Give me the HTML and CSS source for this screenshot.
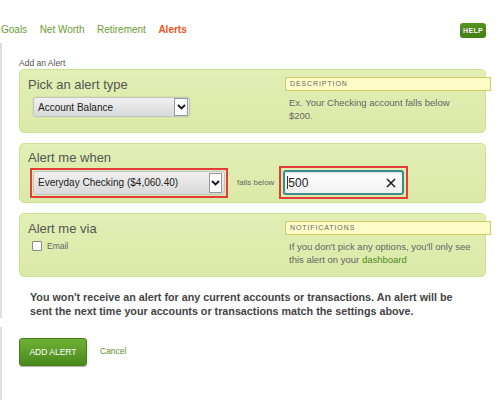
FILE: index.html
```html
<!DOCTYPE html>
<html lang="en">
<head>
<meta charset="utf-8">
<title>Add an Alert</title>
<link rel="stylesheet" href="styles.css">
</head>
<body>
<div class="page">
  <nav class="tabs">
    <a class="tab">Goals</a>
    <a class="tab">Net Worth</a>
    <a class="tab">Retirement</a>
    <a class="tab active">Alerts</a>
    <span class="help">HELP</span>
  </nav>

  <div class="content">
    <div class="title">Add an Alert</div>

    <section class="panel">
      <div class="main">
        <h2>Pick an alert type</h2>
        <div class="select sel-type">
          <span class="sel-text">Account Balance</span>
          <span class="arrow"><svg width="9" height="6" viewBox="0 0 9 6"><polyline points="1,1 4.5,4.5 8,1" fill="none" stroke="#14142a" stroke-width="1.8"/></svg></span>
        </div>
      </div>
      <aside class="note">
        <div class="note-label">DESCRIPTION</div>
        <p>Ex. Your Checking account falls below $200.</p>
      </aside>
    </section>

    <section class="panel panel-when">
      <div class="main">
        <h2>Alert me when</h2>
        <div class="row">
          <div class="hl hl-select">
            <div class="select sel-acct">
              <span class="sel-text">Everyday Checking ($4,060.40)</span>
              <span class="arrow"><svg width="9" height="6" viewBox="0 0 9 6"><polyline points="1,1 4.5,4.5 8,1" fill="none" stroke="#14142a" stroke-width="1.8"/></svg></span>
            </div>
          </div>
          <span class="falls">falls below</span>
          <div class="hl hl-input">
            <div class="input">
              <span class="caret"></span><span class="val">500</span>
              <svg class="clear" width="10" height="10" viewBox="0 0 10 10"><path d="M1 1L9 9M9 1L1 9" stroke="#222" stroke-width="1.6" fill="none"/></svg>
            </div>
          </div>
        </div>
      </div>
    </section>

    <section class="panel">
      <div class="main">
        <h2>Alert me via</h2>
        <label class="check-row"><span class="checkbox"></span><span class="check-text">Email</span></label>
      </div>
      <aside class="note">
        <div class="note-label">NOTIFICATIONS</div>
        <p>If you don't pick any options, you'll only see this alert on your <a class="link">dashboard</a></p>
      </aside>
    </section>

    <p class="warning">You won't receive an alert for any current accounts or transactions. An alert will be sent the next time your accounts or transactions match the settings above.</p>
  </div>

  <div class="actions">
    <button class="btn">ADD ALERT</button>
    <a class="cancel">Cancel</a>
  </div>
</div>
</body>
</html>
```

FILE: styles.css
```css
* { box-sizing: border-box; }
html, body { margin: 0; padding: 0; background: #fff; }
body { font-family: "Liberation Sans", Arial, sans-serif; color: #555; }
.page { width: 500px; height: 400px; overflow: hidden; }

.tabs {
  display: flex;
  align-items: center;
  gap: 12.5px;
  height: 43px;
  padding: 22px 14px 5px 1px;
}
.tab { font-size: 10px; line-height: 16px; color: #6e9b34; text-decoration: none; }
.tab.active { color: #f2541b; font-weight: bold; }
.help {
  margin-left: auto;
  margin-top: 1px;
  width: 26px;
  height: 15px;
  border-radius: 3px;
  background: linear-gradient(#55951f, #437f16);
  color: #fff;
  font-size: 7px;
  font-weight: bold;
  letter-spacing: 0.3px;
  line-height: 15px;
  text-align: center;
  text-shadow: 0 0 1px rgba(0,0,0,0.4);
}

.content {
  border-left: 2px solid #dedede;
  padding: 15px 14px 0 17px;
}
.title { font-size: 8.5px; line-height: 10px; margin-bottom: 1px; color: #555; }

.panel {
  display: flex;
  align-items: flex-start;
  background: linear-gradient(#e2efb5, #dbe9a8);
  border: 1px solid #cde393;
  border-radius: 5px;
  padding: 7px 0 10px 8px;
}
.panel + .panel { margin-top: 10px; }
.panel-when { padding: 6px 0 3px 8px; }
.main { flex: 1; }
h2 { margin: 0; font-size: 13px; font-weight: normal; line-height: 16px; color: #555; }

.note { flex: none; width: 206px; margin-right: -6px; }
.note-label {
  height: 14px;
  background: #fdfcc6;
  border: 1px solid #cdcc6a;
  padding-left: 4px;
  font-size: 7px;
  line-height: 12px;
  letter-spacing: 0.9px;
  color: #666;
}
.note p { margin: 5px 0 0; padding-left: 4px; width: 190px; font-size: 9.5px; line-height: 13px; color: #666; }
.link { color: #4f8a1f; text-decoration: none; }

.select {
  display: flex;
  align-items: center;
  border: 1px solid #c4c4c4;
  border-radius: 3px;
  background: linear-gradient(#f0f0f0, #d9d9d9);
  padding-left: 4px;
  font-size: 10px;
  color: #222;
}
.sel-text { flex: 1; }
.sel-type { margin: 4px 0 0 5px; width: 157px; height: 20px; box-shadow: 0 0 0 1px #d2e8a0; }
.arrow {
  display: flex;
  align-items: center;
  justify-content: center;
  width: 14px;
  height: 18px;
  background: #fbfbfb;
  border: 1px solid #9a9a9a;
}
.sel-type .arrow { margin-right: 1px; }

.row { display: flex; align-items: center; margin-left: 2px; }
.hl { border: 2px solid #e43b3b; }
.hl-select { padding: 1px; }
.sel-acct { width: 192px; height: 24px; }
.sel-acct .arrow { width: 13px; height: 20px; margin-right: 2px; }
.falls { margin: 0 5px 0 9px; font-size: 8px; color: #666; }
.hl-input { padding: 2px; }
.input {
  display: flex;
  align-items: center;
  width: 121px;
  height: 25px;
  border: 2px solid #3a8d8f;
  border-radius: 3px;
  background: linear-gradient(#ffffff, #f1f1f1);
  box-shadow: inset 0 1px 2px rgba(0,0,0,0.15);
  padding-left: 2px;
}
.caret { width: 1px; height: 13px; background: #333; }
.val { font-size: 12px; color: #222; }
.clear { margin-left: auto; margin-right: 6px; }

.check-row { display: flex; align-items: center; height: 12px; margin-top: 3px; }
.checkbox {
  width: 10px;
  height: 10px;
  margin-left: 4px;
  background: #fff;
  border: 1px solid #8a8a8a;
  border-radius: 1px;
}
.check-text { margin-left: 5px; font-size: 8.5px; color: #666; }

.warning {
  margin: 13px 0 0 11px;
  width: 432px;
  font-size: 10.75px;
  line-height: 14px;
  font-weight: bold;
  color: #444;
}

.actions {
  display: flex;
  align-items: flex-start;
  height: 73px;
  margin-top: 9px;
  padding: 11px 0 0 17px;
  border-left: 2px solid #dedede;
}
.btn {
  width: 68px;
  height: 28px;
  border: 1px solid #44801a;
  border-radius: 3px;
  background: linear-gradient(#6fb136, #4b891d);
  box-shadow: 0 1px 1px rgba(0,0,0,0.3);
  color: #fff;
  font-family: "Liberation Sans", Arial, sans-serif;
  font-size: 8.5px;
  padding: 0;
}
.cancel { margin: 8px 0 0 13px; font-size: 8.5px; line-height: 10px; color: #5e9228; }
```
